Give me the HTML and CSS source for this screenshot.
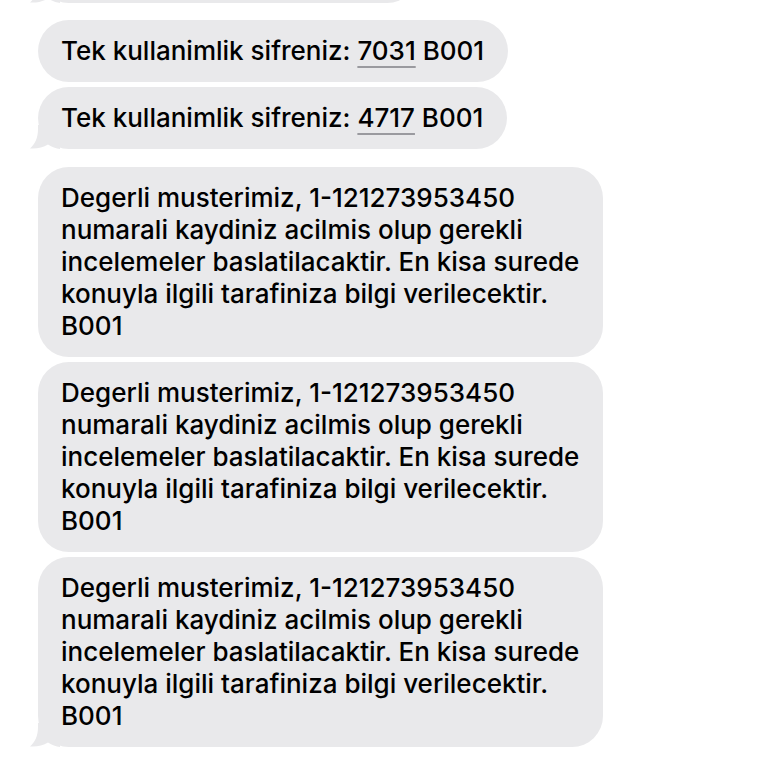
FILE: index.html
```html
<!DOCTYPE html>
<html lang="tr">
<head>
<meta charset="utf-8">
<link rel="stylesheet" href="styles.css">
</head>
<body>
<div class="thread">
  <div class="group">
    <div class="bubble partial"><span class="tail"><svg viewBox="0 0 30 24" width="30" height="24"><path d="M8 0 L8 4 C8 13 5 19 0 23.5 C7 24 13 22.5 18 19.5 C22 22 26 23.5 30 24 L30 0 Z"/></svg></span></div>
  </div>
  <div class="group">
    <div class="bubble">Tek kullanimlik sifreniz: <span class="code">7031</span> B001</div>
    <div class="bubble">Tek kullanimlik sifreniz: <span class="code">4717</span> B001<span class="tail"><svg viewBox="0 0 30 24" width="30" height="24"><path d="M8 0 L8 4 C8 13 5 19 0 23.5 C7 24 13 22.5 18 19.5 C22 22 26 23.5 30 24 L30 0 Z"/></svg></span></div>
  </div>
  <div class="group">
    <div class="bubble">Degerli musterimiz, 1-121273953450<br>numarali kaydiniz acilmis olup gerekli<br>incelemeler baslatilacaktir. En kisa surede<br>konuyla ilgili tarafiniza bilgi verilecektir.<br>B001</div>
    <div class="bubble">Degerli musterimiz, 1-121273953450<br>numarali kaydiniz acilmis olup gerekli<br>incelemeler baslatilacaktir. En kisa surede<br>konuyla ilgili tarafiniza bilgi verilecektir.<br>B001</div>
    <div class="bubble">Degerli musterimiz, 1-121273953450<br>numarali kaydiniz acilmis olup gerekli<br>incelemeler baslatilacaktir. En kisa surede<br>konuyla ilgili tarafiniza bilgi verilecektir.<br>B001<span class="tail"><svg viewBox="0 0 30 24" width="30" height="24"><path d="M8 0 L8 4 C8 13 5 19 0 23.5 C7 24 13 22.5 18 19.5 C22 22 26 23.5 30 24 L30 0 Z"/></svg></span></div>
  </div>
</div>
</body>
</html>
```
FILE: styles.css
```css
html, body {
  margin: 0;
  padding: 0;
  background: #ffffff;
}
body {
  width: 768px;
  height: 768px;
  overflow: hidden;
  font-family: Inter, "Liberation Sans", sans-serif;
  color: #000;
}
.thread {
  display: flex;
  flex-direction: column;
  gap: 18px;
  padding-left: 38px;
}
.group {
  display: flex;
  flex-direction: column;
  align-items: flex-start;
  gap: 5px;
}
.bubble {
  position: relative;
  background: #e9e9eb;
  border-radius: 31px;
  padding: 15px 24px 15px 23px;
  font-size: 26px;
  font-weight: 500;
  line-height: 32px;
  white-space: nowrap;
}
.partial {
  width: 333px;
  height: 32px;
  margin-top: -59px;
  margin-bottom: -1px;
}
.code {
  text-decoration: underline;
  text-decoration-color: #9a9a9f;
  text-decoration-thickness: 2px;
  text-underline-offset: 6px;
}
.tail {
  position: absolute;
  left: -8px;
  bottom: 0;
  width: 30px;
  height: 24px;
  display: block;
}
.tail svg {
  display: block;
  fill: #e9e9eb;
}
```
